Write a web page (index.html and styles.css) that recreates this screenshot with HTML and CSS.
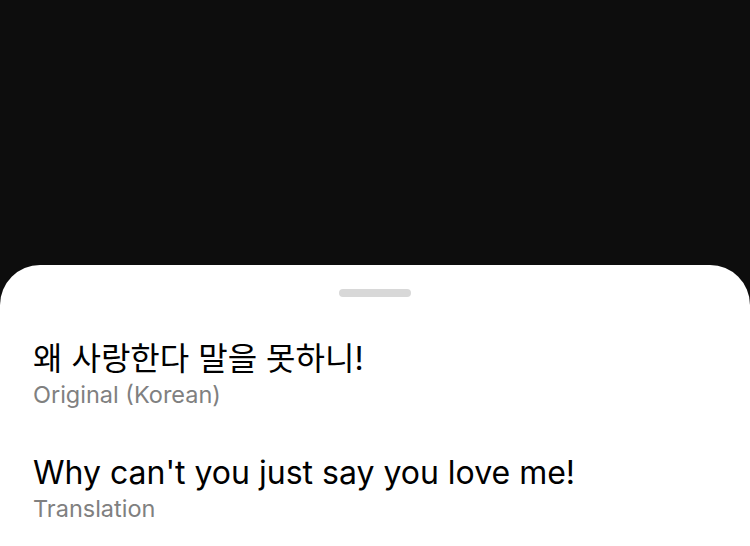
FILE: index.html
```html
<!DOCTYPE html>
<html lang="ko">
<head>
    <meta charset="UTF-8">
    <title>Translate</title>
    <link rel="stylesheet" href="styles.css">
</head>
<body>
<div class="screen">
    <div class="sheet">
        <div class="handle"></div>
        <div class="item">
            <p class="main">왜 사랑한다 말을 못하니!</p>
            <p class="sub">Original (Korean)</p>
        </div>
        <div class="item">
            <p class="main en">Why can't you just say you love me!</p>
            <p class="sub">Translation</p>
        </div>
    </div>
</div>
</body>
</html>
```

FILE: styles.css
```css
* {
    margin: 0;
    padding: 0;
    box-sizing: border-box;
}

html, body {
    height: 100%;
    background: #0d0d0d;
}

body {
    font-family: Inter, "Noto Sans CJK KR", sans-serif;
    overflow: hidden;
}

.screen {
    height: 100%;
    padding-top: 265px;
}

.sheet {
    height: 100%;
    background: #fff;
    border-radius: 40px 40px 0 0;
    padding: 24px 33px 0;
}

.handle {
    width: 72px;
    height: 8px;
    margin: 0 auto 42px;
    background: #d8d8d8;
    border-radius: 4px;
}

.item {
    margin-bottom: 42px;
}

.main {
    font-size: 32px;
    line-height: 40px;
    color: #000;
}

.main.en {
    font-size: 32px;
}

.sub {
    font-size: 23.5px;
    line-height: 32px;
    color: #808080;
}
```
